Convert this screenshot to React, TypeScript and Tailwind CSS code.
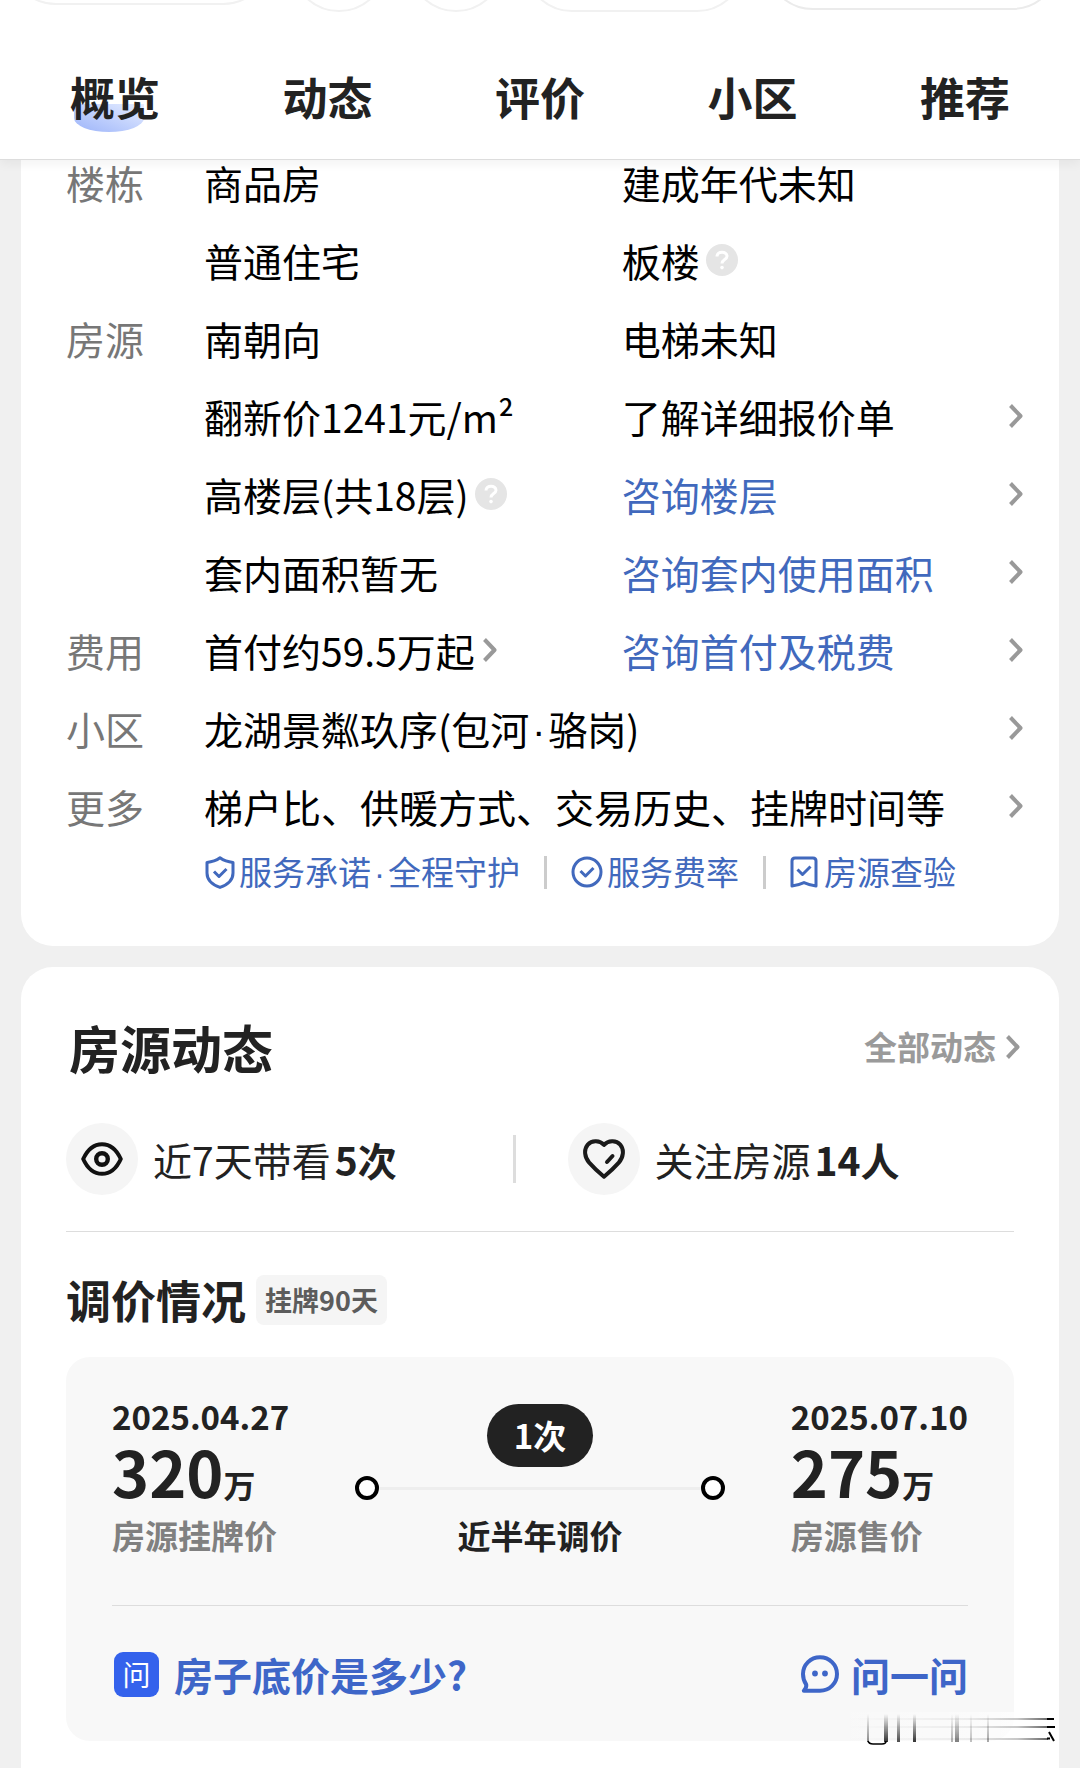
import React from 'react';
import clsx from 'clsx';

interface DetailRow {
  label?: string;
  left: string;
  leftHelp?: boolean;
  leftArrow?: boolean;
  right?: string;
  rightHelp?: boolean;
  link?: boolean;
  arrow?: boolean;
}

const tabs = ['概览', '动态', '评价', '小区', '推荐'];

const rows: DetailRow[] = [
  { label: '楼栋', left: '商品房', right: '建成年代未知' },
  { left: '普通住宅', right: '板楼', rightHelp: true },
  { label: '房源', left: '南朝向', right: '电梯未知' },
  { left: '翻新价1241元/m²', right: '了解详细报价单', arrow: true },
  { left: '高楼层(共18层)', leftHelp: true, right: '咨询楼层', link: true, arrow: true },
  { left: '套内面积暂无', right: '咨询套内使用面积', link: true, arrow: true },
  { label: '费用', left: '首付约59.5万起', leftArrow: true, right: '咨询首付及税费', link: true, arrow: true },
];

// CJK fonts give the middle dot a full-width cell, so it takes a Latin face
const Dot = () => <span className="mx-[3px] font-['Liberation_Sans',sans-serif] leading-none">·</span>;

const wideRows = [
  { label: '小区', text: <>龙湖景粼玖序(包河<Dot />骆岗)</> },
  { label: '更多', text: '梯户比、供暖方式、交易历史、挂牌时间等' },
];

const Chevron = () => (
  <svg className="h-6 w-[14px] shrink-0 text-[#999]" viewBox="0 0 14 24" fill="none" stroke="currentColor" strokeWidth="4" aria-hidden="true">
    <path d="M1.5 1.5 L11.5 12 L1.5 22.5" strokeLinejoin="round" />
  </svg>
);

const HelpButton = () => (
  <button type="button" aria-label="说明" className="ml-1.5 flex h-8 w-8 shrink-0 items-center justify-center rounded-full bg-[#e5e5e5]">
    <svg className="h-5 w-4" viewBox="0 0 16 20" fill="none" stroke="#fff" strokeWidth="3" aria-hidden="true">
      <path d="M3 6.5 C3 0.8 13 0.8 13 6.2 C13 9.6 8 9.4 8 13.4" />
      <circle cx="8" cy="17.6" r="1.8" fill="#fff" stroke="none" />
    </svg>
  </button>
);

const ShieldIcon = () => (
  <svg className="h-[33px] w-[30px]" viewBox="0 0 30 33" fill="none" stroke="currentColor" strokeWidth="3" strokeLinejoin="round" aria-hidden="true">
    <path d="M15 1.8 C18.5 4.4 23 6 28 6.4 V17 C28 24.5 22 29 15 31.4 C8 29 2 24.5 2 17 V6.4 C7 6 11.5 4.4 15 1.8 Z" />
    <path d="M9 15.5 L14 20.5 L21.5 13" />
  </svg>
);

const CircleCheckIcon = () => (
  <svg className="h-8 w-8" viewBox="0 0 32 32" fill="none" stroke="currentColor" strokeWidth="3" aria-hidden="true">
    <circle cx="16" cy="16" r="14" />
    <path d="M9.5 15 L14.5 20 L22.5 12" strokeLinejoin="round" />
  </svg>
);

const BookmarkCheckIcon = () => (
  <svg className="h-8 w-7" viewBox="0 0 28 32" fill="none" stroke="currentColor" strokeWidth="3" strokeLinejoin="round" aria-hidden="true">
    <path d="M2 5 Q2 2 5 2 H23 Q26 2 26 5 V30 C22 29.6 18 28.4 14 26.6 C10 28.4 6 29.6 2 30 Z" />
    <path d="M7.5 13.5 L12.5 18.5 L20.5 10.5" />
  </svg>
);

const EyeIcon = () => (
  <svg className="h-[34px] w-[42px]" viewBox="0 0 42 34" fill="none" stroke="#111" aria-hidden="true">
    <path d="M2.2 17 C7 6.4 13 2.2 21 2.2 C29 2.2 35 6.4 39.8 17 C35 27.6 29 31.8 21 31.8 C13 31.8 7 27.6 2.2 17 Z" strokeWidth="4" strokeLinejoin="round" />
    <circle cx="21" cy="17" r="5.8" strokeWidth="4.4" />
  </svg>
);

const HeartIcon = () => (
  <svg className="h-10 w-[42px]" viewBox="0 0 42 40" fill="none" stroke="#1a1a1a" strokeWidth="4" strokeLinecap="round" strokeLinejoin="round" aria-hidden="true">
    <path d="M21 6 C25 1.5 33 0.8 37.2 5.6 C41.5 10.6 40.4 18.4 35.8 23.6 C31.5 28.4 26.5 33.2 21 37.8 C15.5 33.2 10.5 28.4 6.2 23.6 C1.6 18.4 0.5 10.6 4.8 5.6 C9 0.8 17 1.5 21 6 Z" />
    <path d="M24 23 L29.5 17" />
  </svg>
);

const ChatIcon = () => (
  <svg className="h-[38px] w-[38px]" viewBox="0 0 38 38" fill="none" stroke="currentColor" strokeWidth="4" strokeLinejoin="round" aria-hidden="true">
    <path d="M19 35.8 H2.8 C5 33.5 5.6 31.5 5.2 29.5 C3 26.5 2 23 2 19 C2 9.6 9.6 2.2 19 2.2 C28.4 2.2 36 9.6 36 19 C36 28.4 28.4 35.8 19 35.8 Z" />
    <circle cx="14" cy="18.5" r="2.9" fill="currentColor" stroke="none" />
    <circle cx="24" cy="18.5" r="2.9" fill="currentColor" stroke="none" />
  </svg>
);

// Leftover strokes of a faded stamp in the lower right corner
const streaks = [
  { x: 41, w: 2, o: 0.45 },
  { x: 58, w: 4, o: 0.8 },
  { x: 71, w: 3, o: 0.7 },
  { x: 87, w: 3, o: 0.8 },
  { x: 125, w: 2, o: 0.3 },
  { x: 129, w: 4, o: 0.5 },
  { x: 144, w: 2, o: 0.25 },
  { x: 161, w: 2, o: 0.35 },
];

const FadedStamp = () => (
  <svg className="pointer-events-none absolute right-[3px] bottom-[22px] h-9 w-[230px]" viewBox="0 0 230 36" aria-hidden="true">
    <defs>
      <linearGradient id="down" x1="0" y1="0" x2="0" y2="1">
        <stop offset="0" stopColor="#000" stopOpacity="0" />
        <stop offset="1" stopColor="#000" />
      </linearGradient>
      <linearGradient id="across" x1="0" y1="0" x2="1" y2="0">
        <stop offset="0" stopColor="#000" stopOpacity="0" />
        <stop offset="0.6" stopColor="#000" stopOpacity="0.06" />
        <stop offset="0.85" stopColor="#000" stopOpacity="0.22" />
        <stop offset="1" stopColor="#000" stopOpacity="0.6" />
      </linearGradient>
      <linearGradient id="haze" x1="0" y1="0" x2="1" y2="0">
        <stop offset="0" stopColor="#fff" stopOpacity="0" />
        <stop offset="0.6" stopColor="#fff" stopOpacity="0.4" />
        <stop offset="1" stopColor="#fff" />
      </linearGradient>
    </defs>
    <rect x="0" y="2" width="230" height="34" fill="url(#haze)" />
    {streaks.map((s) => (
      <rect key={s.x} x={s.x} y="4" width={s.w} height="28" fill="url(#down)" opacity={s.o} />
    ))}
    <path d="M42 31 Q43 34 47 34 H56 Q60 34 60 31" fill="none" stroke="#000" strokeWidth="1.6" />
    {[8, 16, 28].map((y) => (
      <rect key={y} x="20" y={y} width="202" height="2" fill="url(#across)" />
    ))}
    <path d="M221 9 H228 M221 17 H229 M221 28.5 H224 M223 22 L228 31" stroke="#000" strokeWidth="2" />
  </svg>
);

const PriceColumn = ({ date, price, label }: { date: string; price: string; label: string }) => (
  <div>
    <p className="text-[33px] leading-[42px] font-bold">{date}</p>
    <p className="text-[63px] leading-[68px] font-bold">
      {price}
      <span className="text-[32px] leading-none">万</span>
    </p>
    <p className="text-[33px] leading-[60px] font-bold text-[#808080]">{label}</p>
  </div>
);

const App = () => {
  return (
    <div className="min-h-screen overflow-hidden bg-[#f0f0f0] font-['Noto_Sans_CJK_SC',sans-serif] text-[#222]">
      <header className="relative z-10 h-40 border-b border-[#ddd] bg-white shadow-[0_4px_10px_rgba(0,0,0,0.05)]">
        {/* bottom edges of the toolbar buttons above the tabs */}
        <div className="flex h-3 justify-between overflow-hidden pr-5 pl-2">
          <div className="-mt-[91px] h-24 w-[25%] rounded-full border-2 border-[#f1f1f1]" />
          <div className="-mt-[84px] h-24 w-24 rounded-full border-2 border-[#f1f1f1]" />
          <div className="-mt-[84px] h-24 w-24 rounded-full border-2 border-[#f1f1f1]" />
          <div className="-mt-[84px] h-24 w-[21%] rounded-full border-2 border-[#f1f1f1]" />
          <div className="-mt-[86px] h-24 w-[28%] rounded-full border-2 border-[#ebebeb]" />
        </div>
        <nav className="flex justify-between px-[70px] pt-[53px]">
          {tabs.map((tab, i) => (
            <a key={tab} href="#" className="relative text-[45px] leading-[64px] font-bold">
              {i === 0 && (
                <span className="absolute bottom-[-3px] left-1 h-7 w-[70px] rounded-b-[50%] bg-linear-to-tr from-[#9db4f9] to-[#e6edff]" />
              )}
              <span className="relative">{tab}</span>
            </a>
          ))}
        </nav>
      </header>

      <main className="px-[21px]">
        <section className="-mt-[17px] rounded-b-[32px] bg-white pr-9 pb-[47px] pl-[45px] text-[39px] text-black">
          {rows.map((row) => (
            <div key={row.left} className="grid h-[78px] grid-cols-[138px_51fr_49fr] items-center">
              <span className="text-[#777]">{row.label}</span>
              <span className="flex items-center">
                {row.left}
                {row.leftHelp && <HelpButton />}
                {row.leftArrow && <span className="ml-2"><Chevron /></span>}
              </span>
              {row.arrow ? (
                <a href="#" className={clsx('flex items-center justify-between', row.link && 'text-[#4169bd]')}>
                  {row.right}
                  <Chevron />
                </a>
              ) : (
                <span className="flex items-center">
                  {row.right}
                  {row.rightHelp && <HelpButton />}
                </span>
              )}
            </div>
          ))}
          {wideRows.map((row) => (
            <div key={row.label} className="grid h-[78px] grid-cols-[138px_1fr] items-center">
              <span className="text-[#777]">{row.label}</span>
              <a href="#" className="flex items-center justify-between">
                <span>{row.text}</span>
                <Chevron />
              </a>
            </div>
          ))}
          <div className="flex h-[54px] items-center pl-[139px] text-[33px] text-[#4169bd]">
            <a href="#" className="flex items-center gap-1">
              <ShieldIcon />
              <span>服务承诺<Dot />全程守护</span>
            </a>
            <span className="mx-6 h-[33px] w-[3px] bg-[#ccc]" />
            <a href="#" className="flex items-center gap-1">
              <CircleCheckIcon />
              服务费率
            </a>
            <span className="mx-6 h-[33px] w-[3px] bg-[#ccc]" />
            <a href="#" className="flex items-center gap-1.5">
              <BookmarkCheckIcon />
              房源查验
            </a>
          </div>
        </section>

        <section className="relative mt-[21px] rounded-t-[32px] bg-white px-[45px] pt-12 pb-[27px]">
          <div className="flex h-16 items-center justify-between">
            <h2 className="pl-[3px] text-[51px] font-bold">房源动态</h2>
            <a href="#" className="-mr-1.5 flex items-center gap-2.5 text-[33px] font-bold text-[#9a9a9a]">
              全部动态
              <Chevron />
            </a>
          </div>

          <div className="mt-11 flex items-center text-[39px]">
            <div className="flex flex-1 items-center">
              <span className="mr-[15px] flex h-[72px] w-[72px] items-center justify-center rounded-full bg-[#f5f5f5]">
                <EyeIcon />
              </span>
              近7天带看<b className="ml-1">5次</b>
            </div>
            <span className="h-12 w-[3px] bg-[#ddd]" />
            <div className="flex flex-1 items-center pl-[52px]">
              <span className="mr-[15px] flex h-[72px] w-[72px] items-center justify-center rounded-full bg-[#f5f5f5]">
                <HeartIcon />
              </span>
              关注房源<b className="ml-1">14人</b>
            </div>
          </div>

          <div className="mt-9 flex items-center gap-[10px] border-t border-[#ddd] pt-[43px]">
            <h3 className="text-[45px] leading-[50px] font-bold">调价情况</h3>
            <span className="rounded-lg bg-[#f5f5f5] px-[9px] text-[27px] leading-[50px] font-bold text-[#5c5c5c]">挂牌90天</span>
          </div>

          <div className="mt-8 rounded-3xl bg-[#f8f8f8] px-[46px] pt-[38px] pb-8">
            <div className="flex justify-between">
              <PriceColumn date="2025.04.27" price="320" label="房源挂牌价" />
              <div className="mx-[66px] flex flex-1 flex-col items-center pt-[9px]">
                <span className="flex h-[63px] items-center rounded-full bg-[#222] px-[27px] text-[33px] font-bold text-white">1次</span>
                <div className="mt-[9px] flex w-full items-center">
                  <span className="h-6 w-6 rounded-full border-4 border-black bg-white" />
                  <span className="h-[3px] flex-1 bg-[#eee]" />
                  <span className="h-6 w-6 rounded-full border-4 border-black bg-white" />
                </div>
                <p className="mt-[5px] text-[33px] leading-[60px] font-bold">近半年调价</p>
              </div>
              <PriceColumn date="2025.07.10" price="275" label="房源售价" />
            </div>
            <div className="mt-10 flex h-[104px] items-center justify-between border-t border-[#ddd] pt-[33px] text-[39px] font-bold text-[#3e66c8]">
              <a href="#" className="flex items-center">
                <span className="mr-[15px] ml-[2px] flex h-[45px] w-[45px] items-center justify-center rounded-[9px] bg-[#3462ec] text-[28px] font-normal text-white">问</span>
                房子底价是多少?
              </a>
              <a href="#" className="flex items-center gap-3">
                <ChatIcon />
                问一问
              </a>
            </div>
          </div>
          <FadedStamp />
        </section>
      </main>
    </div>
  );
};

export default App;
